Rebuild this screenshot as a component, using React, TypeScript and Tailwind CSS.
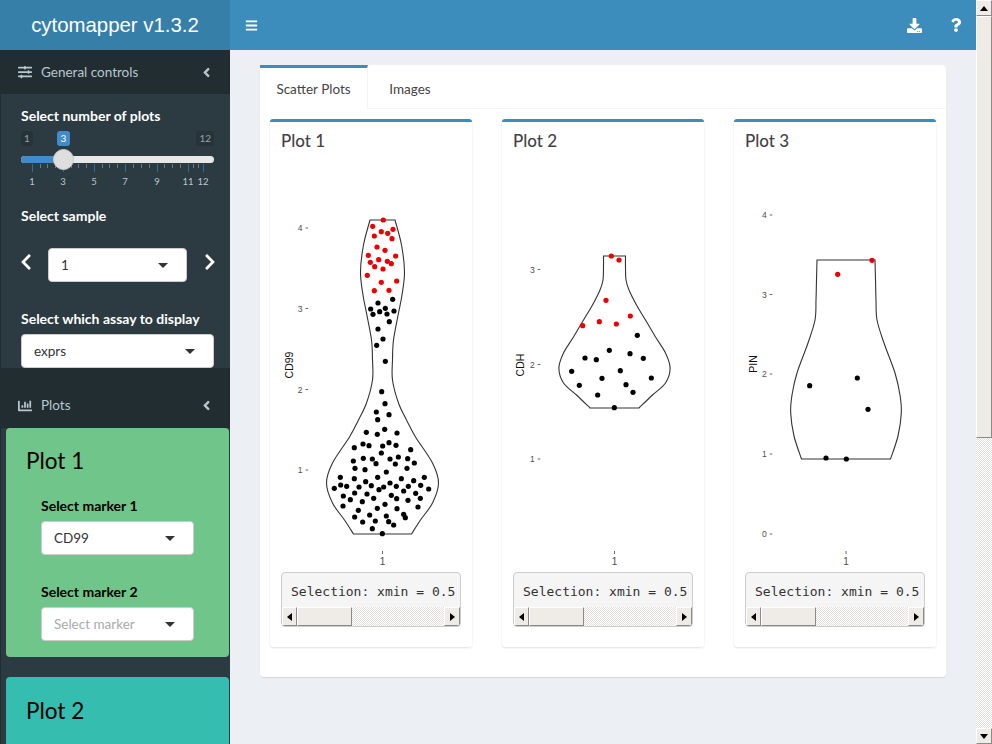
import { FaAngleLeft, FaBars, FaChartBar, FaChevronLeft, FaChevronRight, FaDownload, FaQuestion, FaSlidersH } from 'react-icons/fa';

type Pt = [number, number];

// Page coordinates read off the reference, the svg viewBox is shifted per plot
interface PlotData {
  title: string;
  marker: string;
  left: number;
  cx: number;
  labelX: number;
  labelY: number;
  ticks: { label: string; y: number }[];
  tickX: number;
  profile: Pt[];
  red: Pt[];
  black: Pt[];
}

function zoomed(ox: number, oy: number, pts: Pt[]): Pt[] {
  return pts.map(([x, y]) => [ox + x / 3, oy + y / 3] as Pt);
}

const plots: PlotData[] = [
  {
    title: 'Plot 1',
    marker: 'CD99',
    left: 270,
    cx: 382.5,
    labelX: 293,
    labelY: 365,
    tickX: 305.5,
    ticks: [
      { label: '4', y: 228 },
      { label: '3', y: 308.5 },
      { label: '2', y: 389.5 },
      { label: '1', y: 470 },
    ],
    profile: [[220, 12.5], [245, 19], [272, 22], [295, 19.5], [313, 16], [340, 11], [360, 10], [380, 10], [403, 16], [420, 24], [437, 33], [463, 50], [483, 56], [503, 50], [520, 38], [534, 29]],
    red: zoomed(270, 200, [[340, 60], [308, 79], [334, 95], [353, 100], [369, 88], [313, 108], [366, 116], [321, 141], [345, 151], [295, 166], [377, 168], [301, 187], [326, 179], [352, 184], [364, 191], [314, 200], [339, 207], [292, 226], [334, 247], [380, 243], [313, 272], [357, 271]]),
    black: [
      ...zoomed(270, 200, [[368, 298], [324, 309], [302, 327], [346, 325], [329, 335], [309, 343], [351, 342], [372, 333], [358, 365], [324, 387], [339, 417], [320, 436], [346, 484]]),
      ...zoomed(270, 380, [[335, 35], [345, 71], [319, 96], [357, 104], [323, 119], [344, 148], [289, 157], [322, 163], [381, 159], [357, 188], [279, 192], [297, 197], [338, 198], [378, 196], [253, 203], [422, 209], [334, 219], [280, 235], [307, 237], [250, 243], [318, 251], [360, 237], [385, 231], [376, 252], [413, 236], [433, 249], [255, 265], [285, 269], [411, 265], [349, 276], [211, 292], [253, 296], [323, 292], [394, 296], [463, 292], [431, 302], [287, 305], [360, 309], [212, 315], [230, 319], [304, 317], [267, 321], [193, 325], [341, 321], [327, 329], [379, 319], [415, 319], [452, 316], [476, 327], [401, 333], [437, 340], [254, 339], [291, 342], [220, 348], [241, 359], [364, 346], [380, 356], [311, 355], [451, 355], [414, 361], [277, 365], [219, 378], [345, 373], [322, 385], [381, 386], [444, 381], [265, 391], [299, 405], [254, 411], [349, 408], [401, 403], [406, 413], [278, 426], [316, 423], [356, 425], [371, 435], [307, 446], [337, 461]]),
    ],
  },
  {
    title: 'Plot 2',
    marker: 'CDH',
    left: 502,
    cx: 614.5,
    labelX: 524,
    labelY: 365,
    tickX: 537.7,
    ticks: [
      { label: '3', y: 269.5 },
      { label: '2', y: 364.5 },
      { label: '1', y: 459 },
    ],
    profile: [[256, 11], [268, 11], [280, 11.5], [290, 14.5], [305, 22], [320, 31], [337, 41], [353, 51], [368, 55.6], [383, 51], [395, 38], [408, 24.5]],
    red: zoomed(500, 240, [[334, 48], [357, 60], [318, 181], [391, 228], [298, 245], [349, 252], [248, 257]]),
    black: zoomed(500, 240, [[412, 286], [328, 331], [390, 341], [255, 354], [289, 359], [430, 355], [361, 392], [215, 394], [306, 415], [454, 414], [238, 436], [378, 434], [399, 457], [293, 465], [343, 503]]),
  },
  {
    title: 'Plot 3',
    marker: 'PIN',
    left: 734,
    cx: 846,
    labelX: 756.5,
    labelY: 364,
    tickX: 769.7,
    ticks: [
      { label: '4', y: 215 },
      { label: '3', y: 294.5 },
      { label: '2', y: 374 },
      { label: '1', y: 454 },
      { label: '0', y: 534 },
    ],
    profile: [[260, 29], [280, 29.5], [300, 30], [320, 31], [343, 38], [373, 49], [395, 54], [413, 55.3], [436, 52], [459, 44.5]],
    red: zoomed(735, 200, [[411, 181], [308, 223]]),
    black: zoomed(735, 200, [[367, 534], [224, 557], [399, 628], [273, 774], [334, 777]]),
  },
];

// Catmull-Rom through the points, so the outline stays smooth
function smooth(pts: Pt[]): string {
  let d = '';
  for (let i = 0; i < pts.length - 1; i++) {
    const p0 = pts[Math.max(i - 1, 0)];
    const p1 = pts[i];
    const p2 = pts[i + 1];
    const p3 = pts[Math.min(i + 2, pts.length - 1)];
    const c1x = p1[0] + (p2[0] - p0[0]) / 6;
    const c1y = p1[1] + (p2[1] - p0[1]) / 6;
    const c2x = p2[0] - (p3[0] - p1[0]) / 6;
    const c2y = p2[1] - (p3[1] - p1[1]) / 6;
    d += ` C${c1x} ${c1y} ${c2x} ${c2y} ${p2[0]} ${p2[1]}`;
  }
  return d;
}

function violinPath(cx: number, profile: Pt[]): string {
  const right = profile.map(([y, w]) => [cx + w, y] as Pt);
  const left = [...profile].reverse().map(([y, w]) => [cx - w, y] as Pt);
  return `M${right[0][0]} ${right[0][1]}${smooth(right)} L${left[0][0]} ${left[0][1]}${smooth(left)} Z`;
}

function Violin({ plot }: { plot: PlotData }) {
  return (
    <svg viewBox={`${plot.left} 160 202 410`} className="block h-[410px] w-[202px]">
      <path d={violinPath(plot.cx, plot.profile)} fill="none" stroke="#333" strokeWidth="1.1" />
      {plot.ticks.map((t) => (
        <g key={t.label}>
          <text x={plot.tickX - 3} y={t.y + 3} textAnchor="end" fontSize="8.5" fill="#4d4d4d" fontFamily="Liberation Sans, sans-serif">{t.label}</text>
          <line x1={plot.tickX} x2={plot.tickX + 2.6} y1={t.y} y2={t.y} stroke="#555" strokeWidth="0.9" />
        </g>
      ))}
      <text
        x={plot.labelX}
        y={plot.labelY}
        textAnchor="middle"
        fontSize="10.5"
        fill="#111"
        fontFamily="Liberation Sans, sans-serif"
        transform={`rotate(-90 ${plot.labelX} ${plot.labelY})`}
      >
        {plot.marker}
      </text>
      <line x1={plot.cx} x2={plot.cx} y1={551} y2={554} stroke="#555" strokeWidth="0.9" />
      <text x={plot.cx} y={565} textAnchor="middle" fontSize="10" fill="#4d4d4d" fontFamily="Liberation Sans, sans-serif">1</text>
      {plot.black.map(([x, y], i) => <circle key={i} cx={x} cy={y} r="2.6" fill="#000" />)}
      {plot.red.map(([x, y], i) => <circle key={i} cx={x} cy={y} r="2.6" fill="#ee0000" />)}
    </svg>
  );
}

function Arrow({ dir }: { dir: 'up' | 'down' | 'left' | 'right' }) {
  const points = { up: '0,5 4,0 8,5', down: '0,0 8,0 4,5', left: '5,0 5,8 0,4', right: '0,0 0,8 5,4' }[dir];
  const size = dir === 'up' || dir === 'down' ? 'h-[5px] w-[8px]' : 'h-[8px] w-[5px]';
  return (
    <svg viewBox={dir === 'up' || dir === 'down' ? '0 0 8 5' : '0 0 5 8'} className={size}>
      <polygon points={points} fill="#000" />
    </svg>
  );
}

const oldButton = 'flex items-center justify-center bg-[#efebe7] border-t border-l border-t-white border-l-white border-r border-b border-r-[#8a8a8a] border-b-[#8a8a8a]';
const checker = 'bg-[repeating-conic-gradient(#e4e0dc_0_25%,#ffffff_0_50%)] bg-[length:2px_2px]';

function SelectionOutput() {
  return (
    <div className="mx-[11px] flex h-[55px] flex-col overflow-hidden rounded border border-[#cccccc] bg-[#f5f5f5]">
      <div className="flex-1 whitespace-nowrap pl-[9px] pt-[10px] font-['DejaVu_Sans_Mono',monospace] text-[13px] leading-[18px] text-[#333333]">
        Selection: xmin = 0.5
      </div>
      <div className={`flex h-[19px] ${checker}`}>
        <div className={`${oldButton} w-[15px]`}><Arrow dir="left" /></div>
        <div className={`${oldButton} w-[55px]`} />
        <div className="flex-1" />
        <div className={`${oldButton} w-[16px]`}><Arrow dir="right" /></div>
      </div>
    </div>
  );
}

function PlotBox({ plot }: { plot: PlotData }) {
  return (
    <div className="h-[528px] w-[202px] rounded-[3px] border-t-[3px] border-[#3c8dbc] bg-white shadow-[0_1px_2px_rgba(0,0,0,0.12)]">
      <h3 className="pl-[11px] pt-[8px] text-[17px] font-medium leading-[22px] text-[#444444]">{plot.title}</h3>
      <div className="mt-[8px]">
        <Violin plot={plot} />
      </div>
      <div className="mt-[2px]">
        <SelectionOutput />
      </div>
    </div>
  );
}

function Select({ value, placeholder, className }: { value: string; placeholder?: boolean; className: string }) {
  return (
    <div className={`flex h-[34px] shrink-0 items-center justify-between rounded border border-[#cccccc] bg-white pl-[12px] pr-[18px] text-[13.5px] ${placeholder ? 'text-[#aaaaaa]' : 'text-[#333333]'} ${className}`}>
      <span>{value}</span>
      <svg viewBox="0 0 10 5" className="h-[5px] w-[10px]"><polygon points="0,0 10,0 5,5" fill="#333" /></svg>
    </div>
  );
}

const majorTicks = [
  { label: '1', x: 32 },
  { label: '3', x: 63 },
  { label: '5', x: 94 },
  { label: '7', x: 125 },
  { label: '9', x: 157 },
  { label: '11', x: 188 },
  { label: '12', x: 203 },
];
const minorTicks = [40, 47, 55, 71, 78, 86, 102, 109, 117, 133, 141, 149, 164, 172, 180, 193, 198];

function Slider() {
  return (
    <div className="relative mt-[7px] h-[60px] w-[193px]">
      <span className="absolute left-0 top-0 rounded-[3px] bg-[#26343a] px-[3px] text-[10px] leading-[15px] text-[#99a3a8]">1</span>
      <span className="absolute left-[36px] top-0 rounded-[3px] bg-[#428bca] px-[3.5px] text-[10px] leading-[15px] text-white">3</span>
      <span className="absolute right-0 top-0 rounded-[3px] bg-[#26343a] px-[3px] text-[10px] leading-[15px] text-[#99a3a8]">12</span>
      <div className="absolute left-0 top-[25px] h-[7px] w-full rounded-full bg-[#e8e8e8]" />
      <div className="absolute left-0 top-[25px] h-[7px] w-[42px] rounded-l-full bg-[#428bca]" />
      {minorTicks.map((x) => (
        <div key={x} className="absolute top-[33px] h-[4px] w-px bg-[#6b7a80]" style={{ left: x - 21 }} />
      ))}
      {majorTicks.map((t) => (
        <div key={t.label}>
          <div className="absolute top-[33px] h-[8px] w-px bg-[#2f6d97]" style={{ left: t.x - 21 }} />
          <span className="absolute top-[45px] w-[20px] -translate-x-1/2 text-center text-[9.5px] leading-[12px] text-[#b8c7ce]" style={{ left: t.x - 21 }}>{t.label}</span>
        </div>
      ))}
      <div className="absolute left-[32px] top-[18px] h-[21px] w-[21px] rounded-full border border-[#cccccc] bg-[#dedede]" />
    </div>
  );
}

function MarkerBox({ title, className, children }: { title: string; className: string; children?: React.ReactNode }) {
  return (
    <div className={`mb-[20px] ml-[6px] mr-px rounded pl-[20px] text-black ${className}`}>
      <h2 className="text-[22.5px] leading-[30px]">{title}</h2>
      {children}
    </div>
  );
}

function Sidebar() {
  return (
    <aside className="h-[694px] w-[230px] shrink-0 overflow-hidden bg-[#2c3b41] shadow-[inset_1px_0_0_#222d32]">
      <div className="flex h-[44px] items-center justify-between bg-[#222d32] pl-[18px] pr-[16px] text-[13.5px] text-[#b8c7ce]">
        <span className="flex items-center gap-[9px]"><FaSlidersH className="text-[14px]" /> General controls</span>
        <FaAngleLeft className="text-[15px]" />
      </div>
      <div className="h-[274px] overflow-hidden pl-[21px] pr-[16px] pt-[13px] text-white">
        <div className="text-[14px] font-bold leading-[17px]">Select number of plots</div>
        <Slider />
        <div className="mt-[16px] text-[14px] font-bold leading-[17px]">Select sample</div>
        <div className="mt-[24px] flex items-center">
          <FaChevronLeft className="-ml-[4px] shrink-0 -translate-y-[3px] text-[18px]" />
          <Select value="1" className="ml-[13px] w-[139px]" />
          <FaChevronRight className="ml-[14px] shrink-0 -translate-y-[3px] text-[18px]" />
        </div>
        <div className="mt-[28px] text-[14px] font-bold leading-[17px]">Select which assay to display</div>
        <Select value="exprs" className="mt-[7px] w-[193px]" />
      </div>
      <div className="flex h-[60px] items-center justify-between bg-[#222d32] pl-[18px] pr-[16px] pt-[15px] text-[13.5px] text-[#b8c7ce]">
        <span className="flex items-center gap-[9px]"><FaChartBar className="text-[14px]" /> Plots</span>
        <FaAngleLeft className="text-[15px]" />
      </div>
      <MarkerBox title="Plot 1" className="bg-[#70c58a] pt-[18px]">
        <div className="ml-[15px] h-[181px] pt-[21px]">
          <div className="text-[14px] font-bold leading-[17px]">Select marker 1</div>
          <Select value="CD99" className="mt-[7px] w-[153px]" />
          <div className="mt-[28px] text-[14px] font-bold leading-[17px]">Select marker 2</div>
          <Select value="Select marker" placeholder className="mt-[7px] w-[153px]" />
        </div>
      </MarkerBox>
      <MarkerBox title="Plot 2" className="h-[100px] bg-[#35bdb0] pt-[19px]" />
    </aside>
  );
}

function PageScrollbar() {
  return (
    <div className={`flex h-[744px] w-[16px] shrink-0 flex-col ${checker}`}>
      <div className={`${oldButton} h-[16px]`}><Arrow dir="up" /></div>
      <div className={`${oldButton} h-[422px]`} />
      <div className="flex-1" />
      <div className={`${oldButton} h-[16px]`}><Arrow dir="down" /></div>
    </div>
  );
}

export default function App() {
  return (
    <div className="flex h-[744px] w-[992px] overflow-hidden bg-[#ecf0f5] font-['Lato','Noto_Sans',sans-serif]">
      <div className="w-[976px]">
        <header className="flex h-[50px] bg-[#3c8dbc] text-white">
          <div className="flex w-[230px] items-center justify-center bg-[#367fa9] font-['Liberation_Sans',sans-serif] text-[20.4px]">cytomapper v1.3.2</div>
          <div className="flex flex-1 items-center justify-between pl-[15px] pr-[13px]">
            <FaBars className="text-[13px]" />
            <div className="flex items-center gap-[27px]">
              <FaDownload className="text-[15px]" />
              <FaQuestion className="text-[14px]" />
            </div>
          </div>
        </header>
        <div className="flex">
          <Sidebar />
          <main className="flex-1 pl-[30px] pt-[15px]">
            <div className="h-[612px] w-[686px] rounded bg-white shadow-[0_1px_1px_rgba(0,0,0,0.1)]">
              <div className="flex h-[44px] border-b border-[#f4f4f4] text-[13.5px] text-[#444444]">
                <div className="flex h-[44px] w-[108px] items-center justify-center border-r border-t-[3px] border-r-[#f4f4f4] border-t-[#3c8dbc] bg-white pt-[1px]">Scatter Plots</div>
                <div className="flex h-[43px] w-[84px] items-center justify-center pt-[5px]">Images</div>
              </div>
              <div className="flex gap-[30px] pl-[10px] pt-[10px]">
                {plots.map((p) => <PlotBox key={p.title} plot={p} />)}
              </div>
            </div>
          </main>
        </div>
      </div>
      <PageScrollbar />
    </div>
  );
}
